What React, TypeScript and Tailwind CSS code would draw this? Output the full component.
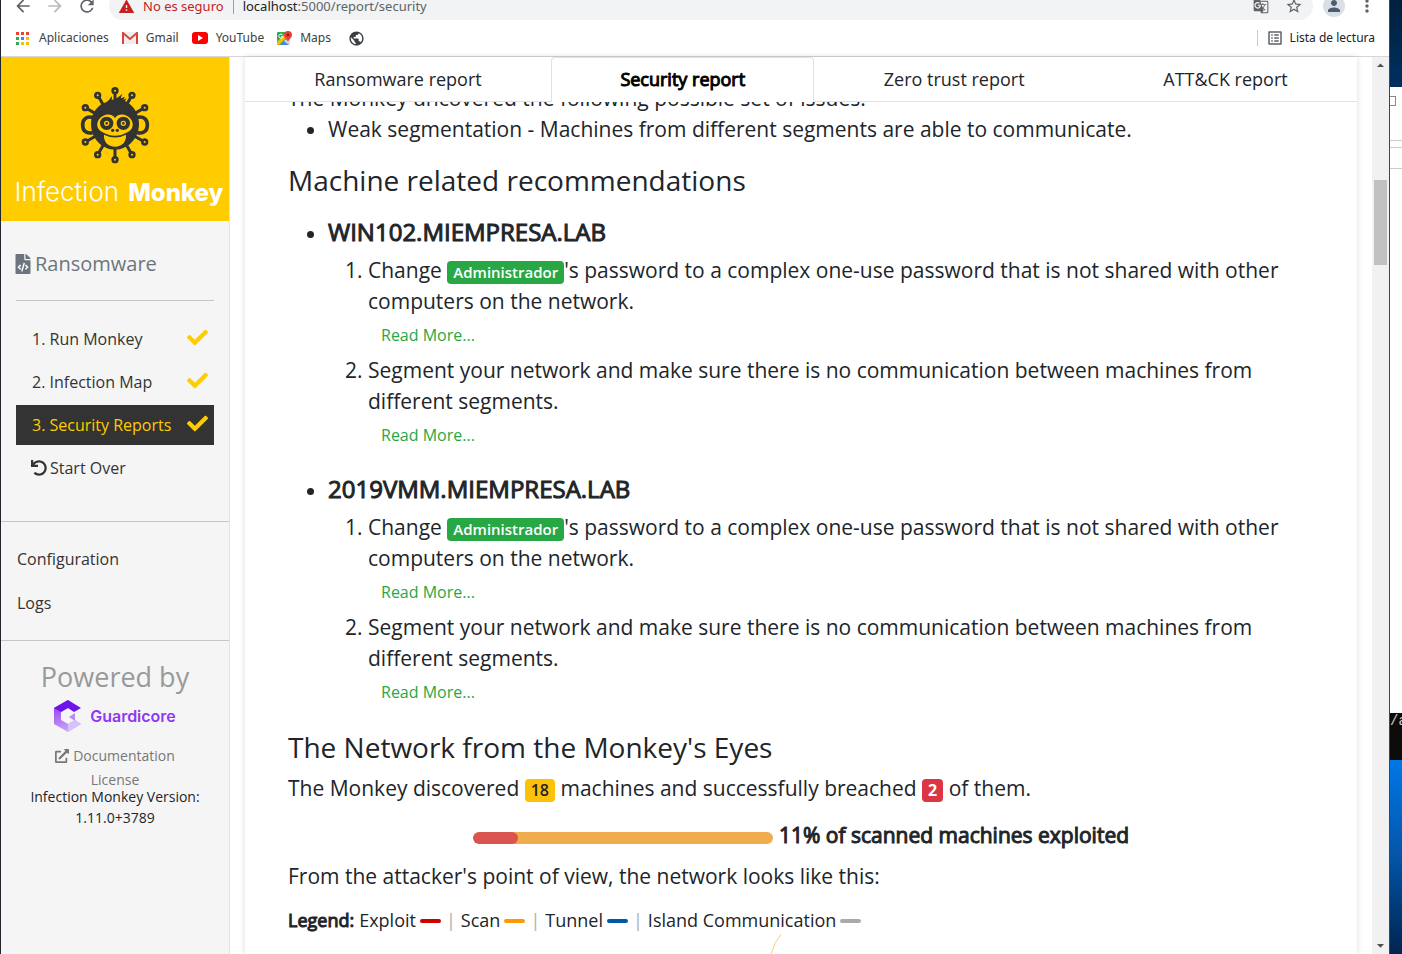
import React from "react";
import { FaCheck, FaExternalLinkAlt, FaFileCode, FaUndo } from "react-icons/fa";
import {
    MdArrowBack,
    MdArrowDropDown,
    MdArrowDropUp,
    MdArrowForward,
    MdGTranslate,
    MdListAlt,
    MdMoreVert,
    MdPerson,
    MdPublic,
    MdRefresh,
    MdStarBorder,
    MdWarning,
} from "react-icons/md";

const tabs = ["Ransomware report", "Security report", "Zero trust report", "ATT&CK report"]

const steps = [
    { label: "1. Run Monkey", active: false },
    { label: "2. Infection Map", active: false },
    { label: "3. Security Reports", active: true },
]

const machines = ["WIN102.MIEMPRESA.LAB", "2019VMM.MIEMPRESA.LAB"]

const scanned = 18
const exploited = 2

const nodes = [
    [343, 104], [291, 118], [394, 118], [254, 155], [432, 155],
    [254, 258], [432, 258], [291, 296], [394, 296], [343, 311],
]

function MonkeyLogo() {
    return (
        <svg viewBox="238 90 210 234" className="h-[78px] w-[70px]" aria-hidden="true">
            <g stroke="#333" strokeWidth="9" fill="#fc0">
                {nodes.map(([x, y]) => (
                    <line key={`l${x}-${y}`} x1={x} y1={y} x2="343" y2="207" />
                ))}
                {nodes.map(([x, y]) => (
                    <circle key={`c${x}-${y}`} cx={x} cy={y} r="7" strokeWidth="8" />
                ))}
            </g>
            <g fill="none" stroke="#333" strokeWidth="11">
                <path d="M276 184c-20-4-30 6-30 23s10 27 30 23" />
                <path d="M410 184c20-4 30 6 30 23s-10 27-30 23" />
            </g>
            <path
                fill="#333"
                d="M318 138c6-4 11-10 15-18 1 5 1 8 0 12 7-1 15-4 23-11l10-8c-4 6-5 10-5 14l12-5-5 9 10-4-5 8c26 12 42 40 42 69 0 42-32 77-72 77s-72-35-72-77c0-31 19-58 47-66z"
            />
            <path
                fill="#fc0"
                d="M343 186c7-11 23-13 35-7 15 7 22 23 16 37-3 7-9 11-17 14-10 6-22 9-34 9s-24-3-34-9c-8-3-14-7-17-14-6-14 1-30 16-37 12-6 28-4 35 7z"
            />
            <path fill="#fc0" d="M310 236q33 17 66 0c2 21-12 36-33 36s-35-15-33-36z" />
            <g fill="#333">
                <circle cx="318" cy="202" r="20" />
                <circle cx="368" cy="202" r="20" />
                <circle cx="336" cy="223" r="5" />
                <circle cx="350" cy="223" r="5" />
            </g>
            <g fill="#333" stroke="#fc0" strokeWidth="4">
                <circle cx="318" cy="202" r="6" />
                <circle cx="368" cy="202" r="6" />
            </g>
        </svg>
    )
}

function GuardicoreMark() {
    return (
        <svg viewBox="0 0 28 32" className="h-8 w-7" aria-hidden="true">
            <defs>
                <linearGradient id="gc" x1="0" y1="0" x2="0.3" y2="1">
                    <stop offset="0" stopColor="#8b2cf5" />
                    <stop offset="1" stopColor="#c9a2f7" />
                </linearGradient>
            </defs>
            <path fill="url(#gc)" d="M14 0L0 8v16l14 8 13-8-6-4-7 4-7-4v-8l7-4z" />
            <path fill="#6d14ea" d="M14 0l13 8-7 4-6-4-7 4-7-4z" />
            <path fill="#b98af5" d="M21 13v8l-6-4z" />
            <path fill="#d9c2fa" d="M14 24l7-4 6 4-13 8z" />
        </svg>
    )
}

function BrowserBar() {
    return (
        <header className="shrink-0 border-b border-[#d6d6d9] bg-white">
            <div className="flex h-5 items-end overflow-hidden text-[#5f6368]">
                <div className="flex h-7 items-center gap-3 pl-3">
                    <button aria-label="Atrás"><MdArrowBack size={20} /></button>
                    <button aria-label="Adelante" className="text-[#bababa]"><MdArrowForward size={20} /></button>
                    <button aria-label="Recargar"><MdRefresh size={20} /></button>
                </div>
                <div className="ml-3 flex h-7 flex-1 items-center rounded-full bg-[#f1f3f4] pr-[10px] pl-[9px] text-sm">
                    <MdWarning size={17} className="text-[#c5221f]" />
                    <span className="ml-2 font-['Noto_Sans',sans-serif] text-[13px] text-[#c5221f]">No es seguro</span>
                    <span className="mx-[9px] h-4 w-px bg-[#9aa0a6]" />
                    <span className="flex-1 font-['Noto_Sans',sans-serif] text-[13px]">
                        <span className="text-[#202124]">localhost</span>:5000/report/security
                    </span>
                    <button aria-label="Traducir" className="mr-4"><MdGTranslate size={16} /></button>
                    <button aria-label="Favorito"><MdStarBorder size={18} /></button>
                </div>
                <div className="flex h-7 items-center gap-3 pr-3 pl-[10px]">
                    <button aria-label="Perfil" className="flex size-[22px] items-center justify-center rounded-full bg-[#dadfe5] text-[#4d5b73]">
                        <MdPerson size={18} />
                    </button>
                    <button aria-label="Menú"><MdMoreVert size={20} /></button>
                </div>
            </div>
            <nav className="flex h-9 items-center gap-[13px] pr-[14px] pl-[15px] font-['Noto_Sans',sans-serif] text-xs text-[#3c4043]">
                <a href="#apps" className="flex items-center gap-[10px]">
                    <svg viewBox="0 0 13 13" className="size-[13px]" aria-hidden="true">
                        <path fill="#ea4335" d="M0 0h3v3H0zM5 0h3v3H5zM10 0h3v3h-3z" />
                        <path fill="#34a853" d="M0 5h3v3H0zM0 10h3v3H0z" />
                        <path fill="#4285f4" d="M5 5h3v3H5z" />
                        <path fill="#fbbc04" d="M10 5h3v3h-3zM5 10h3v3H5zM10 10h3v3h-3z" />
                    </svg>
                    Aplicaciones
                </a>
                <a href="#gmail" className="flex items-center gap-2">
                    <svg viewBox="0 0 16 12" className="h-3 w-4" aria-hidden="true">
                        <path fill="#eee" d="M1 0h14v12H1z" />
                        <path fill="none" stroke="#db4437" strokeWidth="2" d="M1 12V1l7 6 7-6v11" />
                    </svg>
                    Gmail
                </a>
                <a href="#youtube" className="flex items-center gap-2">
                    <svg viewBox="0 0 16 12" className="h-3 w-4" aria-hidden="true">
                        <rect width="16" height="12" rx="3" fill="#f00" />
                        <path fill="#fff" d="M6 3l5 3-5 3z" />
                    </svg>
                    YouTube
                </a>
                <a href="#maps" className="flex items-center gap-2">
                    <svg viewBox="0 0 15 15" className="size-[15px]" aria-hidden="true">
                        <rect y="1" width="13" height="13" rx="1" fill="#34a853" />
                        <path fill="#fbbc04" d="M0 11L10 1h3v2L2 14H0z" />
                        <path fill="#4285f4" d="M3 14l4-4 5 4z" />
                        <path fill="#dadce0" d="M7 10l4-3 2 1v6h-1z" />
                        <path fill="#ea4335" d="M11 0a4 4 0 0 1 4 4c0 3-3 4-4 7-1-3-4-4-4-7a4 4 0 0 1 4-4z" />
                        <circle cx="11" cy="4" r="1.4" fill="#8c1d18" />
                        <path fill="none" stroke="#fff" d="M5.5 4a2 2 0 1 0 .3 1.8H4" />
                    </svg>
                    Maps
                </a>
                <a href="#web" aria-label="Web" className="ml-1"><MdPublic size={17} /></a>
                <span className="ml-auto flex items-center gap-2">
                    <span className="h-4 w-px bg-[#c8cacc]" />
                    <button className="flex items-center gap-[6px] text-[#202124]">
                        <MdListAlt size={18} className="text-[#5f6368]" />
                        Lista de lectura
                    </button>
                </span>
            </nav>
        </header>
    )
}

function Sidebar() {
    return (
        <aside className="w-[229px] shrink-0 border-r border-[#e4e4e4] bg-[#f5f5f5] text-[#333]">
            <div className="flex h-[164px] flex-col items-center bg-[#fc0] pt-[29px]">
                <MonkeyLogo />
                <div className="mt-2 flex items-baseline gap-[9px] pl-2 font-[Inter,sans-serif] text-2xl leading-10 whitespace-nowrap text-white">
                    <span className="text-[26px] font-light">Infection</span>
                    <span className="font-extrabold">Monkey</span>
                </div>
            </div>

            <div className="px-[15px]">
                <div className="flex h-20 items-center gap-[5px] border-b border-[#c6c6c6] pt-[6px] text-xl text-[#6c757d]">
                    <FaFileCode size={20} className="-mx-[3px]" />
                    Ransomware
                </div>
                <ul className="flex flex-col gap-[3px] pt-[18px]">
                    {steps.map((step) => (
                        <li key={step.label}>
                            <a
                                href="#step"
                                className={`flex h-10 items-center justify-between pr-[6px] pl-4 text-base ${step.active ? "bg-[#333] text-[#fc0]" : ""}`}
                            >
                                {step.label}
                                <FaCheck size={21} className="mb-[3px] text-[#fc0]" />
                            </a>
                        </li>
                    ))}
                    <li>
                        <a href="#restart" className="flex h-10 items-center gap-[3px] pl-[15px]">
                            <FaUndo size={16} />
                            Start Over
                        </a>
                    </li>
                </ul>
            </div>

            <ul className="mt-[33px] flex h-[120px] flex-col gap-1 border-y border-[#c6c6c6] px-4 pt-[17px]">
                <li><a href="#configuration" className="flex h-10 items-center">Configuration</a></li>
                <li><a href="#logs" className="flex h-10 items-center">Logs</a></li>
            </ul>

            <div className="flex flex-col items-center pt-5 text-sm text-[#777]">
                <div className="text-[27px] leading-8 text-[#999]">Powered by</div>
                <a href="#guardicore" className="mt-[7px] flex items-center gap-2 font-[Inter,sans-serif] text-base font-semibold text-[#9038f5]">
                    <GuardicoreMark />
                    Guardicore
                </a>
                <a href="#documentation" className="mt-3 flex h-6 items-center gap-1">
                    <FaExternalLinkAlt size={14} />
                    Documentation
                </a>
                <a href="#license" className="leading-6">License</a>
                <div className="-mt-[6px] text-center leading-[21px] text-[#212529]">
                    Infection Monkey Version:<br />1.11.0+3789
                </div>
            </div>
        </aside>
    )
}

function Badge({ className, children }: { className: string; children: React.ReactNode }) {
    return (
        <span className={`inline-block rounded px-[6px] py-[3px] leading-[17px] ${className}`}>
            {children}
        </span>
    )
}

function ReadMore() {
    return (
        <button className="block h-[38px] px-[13px] pb-[2px] text-base text-[#28a745]">Read More...</button>
    )
}

function LegendItem({ label, color }: { label: string; color: string }) {
    return (
        <span className="flex items-center gap-1">
            {label}
            <span className={`h-1 w-[21px] rounded-sm ${color}`} />
        </span>
    )
}

function Report() {
    return (
        <div className="-mt-[19px] px-[43px] text-[21px] leading-[31px]">
            <p>The Monkey uncovered the following possible set of issues:</p>
            <ul className="list-disc pl-10">
                <li>Weak segmentation - Machines from different segments are able to communicate.</li>
            </ul>

            <h3 className="mt-[19px] text-[28px] leading-8">Machine related recommendations</h3>
            <ul className="mt-[21px] list-disc pl-10">
                {machines.map((machine) => (
                    <li key={machine} className="mb-[19px]">
                        <h4 className="mb-[9px] text-2xl leading-[29px] [-webkit-text-stroke:1px]">{machine}</h4>
                        <ol className="list-decimal pl-10">
                            <li>
                                Change{" "}
                                <Badge className="bg-[#28a745] text-[15px] font-semibold text-white">Administrador</Badge>
                                's password to a complex one-use password that is not shared with other computers on
                                the network.
                                <ReadMore />
                            </li>
                            <li>
                                Segment your network and make sure there is no communication between machines from
                                different segments.
                                <ReadMore />
                            </li>
                        </ol>
                    </li>
                ))}
            </ul>

            <h3 className="mb-[10px] text-[28px] leading-8">The Network from the Monkey's Eyes</h3>
            <p>
                The Monkey discovered <Badge className="bg-[#ffc107] text-base font-semibold text-[#212529]">{scanned}</Badge>{" "}
                machines and successfully breached <Badge className="bg-[#dc3545] text-base font-bold text-white">{exploited}</Badge>{" "}
                of them.
            </p>
            <div className="mt-4 flex items-center justify-center gap-[6px]">
                <div className="mt-1 h-3 w-[300px] overflow-hidden rounded-full bg-[#f0ad4e]">
                    <div className="h-full w-[45px] rounded-full bg-[#d9534f]" />
                </div>
                <span className="[-webkit-text-stroke:1px]">11% of scanned machines exploited</span>
            </div>
            <p className="mt-[10px]">From the attacker's point of view, the network looks like this:</p>
            <div className="mt-[15px] flex items-center gap-[5px] text-lg leading-[27px]">
                <span className="flex gap-[5px]">
                    <b className="font-normal [-webkit-text-stroke:1px]">Legend:</b>
                    <LegendItem label="Exploit" color="bg-[#cc0200]" />
                </span>
                <span className="text-[#aeaeae]">|</span>
                <LegendItem label="Scan" color="bg-[#ff9900]" />
                <span className="text-[#aeaeae]">|</span>
                <LegendItem label="Tunnel" color="bg-[#0158aa]" />
                <span className="text-[#aeaeae]">|</span>
                <LegendItem label="Island Communication" color="bg-[#a9aaa9]" />
            </div>
            <svg viewBox="0 0 12 20" className="ml-[482px] h-5 w-3" aria-hidden="true">
                <path d="M11 0Q4 9 1 20" fill="none" stroke="#ffcb80" />
            </svg>
        </div>
    )
}

function DesktopEdge() {
    return (
        <div className="flex w-[13px] shrink-0 flex-col overflow-hidden border-l border-[#444]">
            <div className="h-[87px] bg-linear-to-b from-[#00203f] to-[#003060]" />
            <div className="flex-1 bg-white pt-[9px]">
                <div className="h-[10px] w-[6px] border border-l-0 border-[#888]" />
                <div className="mt-[34px] h-2 border-y border-[#ccc]" />
                <div className="h-[21px] border-b border-[#ccc]" />
            </div>
            <div className="h-[47px] bg-[#0c0c0c] font-['Liberation_Mono',monospace] text-sm leading-4 text-[#ccc]">/a</div>
            <div className="h-[194px] bg-linear-to-b from-[#0078e8] via-[#0455a8] to-[#002550]" />
        </div>
    )
}

export default function App() {
    return (
        <div className="flex h-screen overflow-hidden border-l border-[#23232d] bg-white font-['Open_Sans','Noto_Sans',sans-serif] text-[#212529]">
            <div className="flex min-w-0 flex-1 flex-col">
                <BrowserBar />
                <div className="flex min-h-0 flex-1">
                    <Sidebar />
                    <main className="mx-[15px] flex min-w-0 flex-1 flex-col overflow-hidden shadow-[0_0_6px_rgba(0,0,0,0.15)]">
                        <div role="tablist" className="z-10 flex h-[45px] shrink-0 bg-white text-lg">
                            {tabs.map((tab) => (
                                <button
                                    key={tab}
                                    role="tab"
                                    aria-selected={tab === "Security report"}
                                    className={
                                        tab === "Security report"
                                            ? "flex-auto rounded-t border border-[#dee2e6] border-b-white px-[15px] pb-[2px] text-black [-webkit-text-stroke:1px]"
                                            : "flex-auto border-b border-[#dee2e6] px-4"
                                    }
                                >
                                    {tab}
                                </button>
                            ))}
                        </div>
                        <div className="min-h-0 flex-1 overflow-hidden">
                            <Report />
                        </div>
                    </main>
                    <div className="flex w-[17px] shrink-0 flex-col items-center justify-between bg-[#f1f1f1] text-[#505050]">
                        <MdArrowDropUp size={17} />
                        <div className="mt-[106px] mb-auto h-[85px] w-[13px] bg-[#c1c1c1]" />
                        <MdArrowDropDown size={17} />
                    </div>
                </div>
            </div>
            <DesktopEdge />
        </div>
    )
}
